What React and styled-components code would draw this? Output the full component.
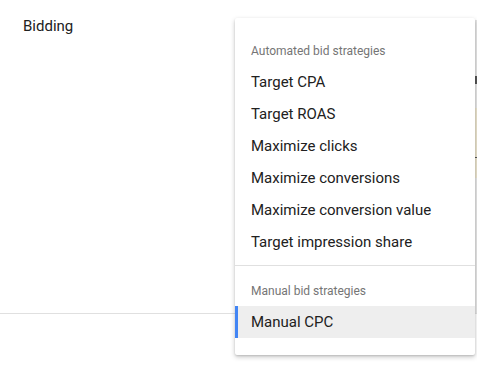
import React from "react";
import styled, { createGlobalStyle } from "styled-components";

const Global = createGlobalStyle`
  html, body { margin: 0; padding: 0; background: #fff; }
  body { font-family: Roboto, "Noto Sans", Arial, sans-serif; -webkit-font-smoothing: antialiased; }
`;

const Page = styled.div`
  position: relative;
  width: 477px;
  height: 372px;
  overflow: hidden;
  display: flex;
  flex-direction: column;
`;

const Section = styled.div`
  display: flex;
  height: 313px;
  border-bottom: 1px solid #e0e0e0;
`;

const Label = styled.div`
  padding: 17px 0 0 23px;
  font-size: 15px;
  line-height: 18px;
  color: #212121;
  flex: 1;
`;

const Preview = styled.div`
  width: 3px;
  margin-top: 20px;
  display: flex;
  flex-direction: column;
`;

const Strip = styled.div`
  height: ${(p) => p.h}px;
  background: ${(p) => p.bg};
  position: relative;
`;

const Tick = styled.div`
  position: absolute;
  left: 0;
  right: 0;
  top: ${(p) => p.top}px;
  height: ${(p) => p.h || 1}px;
  background: #555;
`;

const Menu = styled.div`
  position: absolute;
  left: 235px;
  top: 18px;
  width: 240px;
  padding: 18px 0 17px;
  background: #fff;
  border-radius: 2px;
  box-shadow: 0 2px 5px rgba(0, 0, 0, 0.22), 0 1px 2px rgba(0, 0, 0, 0.12);
`;

const GroupHeader = styled.div`
  height: 30px;
  display: flex;
  align-items: center;
  padding-left: 16px;
  font-size: 12px;
  color: #757575;
`;

const Item = styled.div`
  height: 32px;
  display: flex;
  align-items: center;
  padding-left: 16px;
  font-size: 15px;
  color: #212121;
  background: ${(p) => (p.selected ? "#eeeeee" : "transparent")};
  box-shadow: ${(p) => (p.selected ? "inset 3px 0 0 #4285f4" : "none")};
`;

const Divider = styled.div`
  height: 1px;
  background: #e0e0e0;
  margin: 7px 0 10px;
`;

const automated = [
  "Target CPA",
  "Target ROAS",
  "Maximize clicks",
  "Maximize conversions",
  "Maximize conversion value",
  "Target impression share",
];

export default function App() {
  return (
    <>
      <Global />
      <Page>
        <Section>
          <Label>Bidding</Label>
          <Preview>
            <Strip h={88} bg="#e6e6e6">
              <Tick top={56} h={8} />
            </Strip>
            <Strip h={70} bg="#ebe4cd">
              <Tick top={49} />
            </Strip>
            <Strip h={135} bg="#e6e6e6" />
          </Preview>
        </Section>
        <Menu>
          <GroupHeader>Automated bid strategies</GroupHeader>
          {automated.map((t) => (
            <Item key={t}>{t}</Item>
          ))}
          <Divider />
          <GroupHeader>Manual bid strategies</GroupHeader>
          <Item selected>Manual CPC</Item>
        </Menu>
      </Page>
    </>
  );
}
